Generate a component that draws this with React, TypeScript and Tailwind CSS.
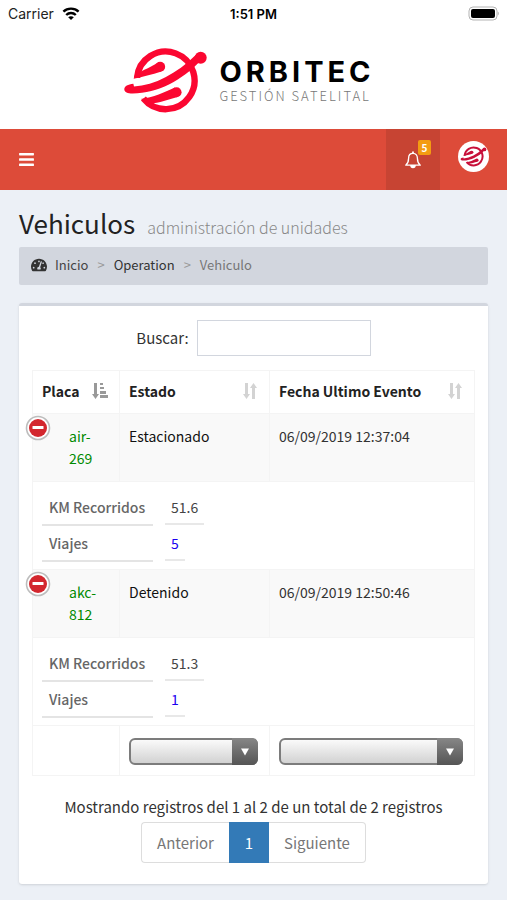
import React from 'react';
import { FaBars, FaTachometerAlt } from 'react-icons/fa';

interface Vehicle {
  prefix: string;
  number: string;
  status: string;
  lastEvent: string;
  km: string;
  trips: string;
}

const vehicles: Vehicle[] = [
  { prefix: 'air-', number: '269', status: 'Estacionado', lastEvent: '06/09/2019 12:37:04', km: '51.6', trips: '5' },
  { prefix: 'akc-', number: '812', status: 'Detenido', lastEvent: '06/09/2019 12:50:46', km: '51.3', trips: '1' },
];

const OrbitMark = ({ className }: { className: string }) => (
  <svg viewBox="3 12 258 200" className={className} fill="none" aria-hidden="true">
    <path d="M47 104 A86 86 0 1 1 66 166" stroke="currentColor" strokeWidth="19" />
    <path d="M37 107 L42 91 C70 82 90 68 112 58 L120 85 C90 95 65 100 37 107 Z" fill="currentColor" />
    <path d="M58 167 C95 164 130 146 160 133 L168 161 C140 168 115 180 84 180 Z" fill="currentColor" />
    <circle cx="116" cy="71" r="15" fill="currentColor" />
    <circle cx="165" cy="147" r="15" fill="currentColor" />
    <path
      d="M9 139 C9 129 20 124 36 122 L38 130 C100 126 165 92 222 36 L236 54 C180 112 110 150 34 151 C18 151 10 147 9 139 Z"
      fill="currentColor"
    />
    <circle cx="237" cy="44" r="18" fill="currentColor" />
  </svg>
);

const WifiIcon = () => (
  <svg viewBox="0 0 18 14" className="h-[14px] w-[18px]" fill="none" stroke="#000" strokeWidth="2.4" aria-hidden="true">
    <path d="M1.4 4.6 C5.6 0.6 12.4 0.6 16.6 4.6" />
    <path d="M4.2 8 C6.9 5.4 11.1 5.4 13.8 8" />
    <path d="M9 13 L6.2 10.2 C7.8 8.8 10.2 8.8 11.8 10.2 Z" fill="#000" stroke="none" />
  </svg>
);

const BatteryIcon = () => (
  <svg viewBox="0 0 33 16" className="h-4 w-[33px]" aria-hidden="true">
    <rect x="3" y="1" width="28" height="13" rx="4" fill="#fff" stroke="#b3b3b3" />
    <rect x="5" y="3" width="24" height="9" rx="2" fill="#000" />
    <path d="M31.8 5.5 C33 6.1 33 8.9 31.8 9.5 Z" fill="#a3a3a3" />
  </svg>
);

const BellIcon = () => (
  <svg viewBox="0 0 18 18" className="h-[18px] w-[18px]" fill="none" stroke="#fff" strokeWidth="1.3" aria-hidden="true">
    <path d="M9 2.4 C5.9 2.4 4.6 4.7 4.6 7.2 C4.6 10.7 3.4 12.8 1.7 14.2 H16.3 C14.6 12.8 13.4 10.7 13.4 7.2 C13.4 4.7 12.1 2.4 9 2.4 Z" strokeLinejoin="round" />
    <path d="M9 0.6 V2.4" strokeWidth="1.8" />
    <path d="M6.9 14.6 A2.1 2.1 0 0 0 11.1 14.6 Z" fill="#fff" />
  </svg>
);

const SortIcon = () => (
  <svg viewBox="0 0 16 18" className="h-[18px] w-4 shrink-0" fill="#d3d3d3" aria-hidden="true">
    <path d="M3 1 H6 V12 H8 L4.5 17 L1 12 H3 Z" />
    <path d="M10 17 H13 V6 H15 L11.5 1 L8 6 H10 Z" />
  </svg>
);

const SortAscIcon = () => (
  <svg viewBox="0 0 17 18" className="h-[18px] w-[17px] shrink-0" fill="#999" aria-hidden="true">
    <path d="M3 1 H6 V12 H8 L4.5 17 L1 12 H3 Z" />
    <rect x="9" y="1" width="3" height="2" />
    <rect x="9" y="5" width="4" height="2" />
    <rect x="9" y="9" width="6" height="3" />
    <rect x="9" y="13" width="8" height="3" />
  </svg>
);

const CollapseIcon = () => (
  <svg viewBox="0 0 26 26" className="h-[26px] w-[26px]" aria-hidden="true">
    <circle cx="13" cy="13" r="11.5" fill="#fff" stroke="#bdbdbd" strokeWidth="1.6" />
    <circle cx="13" cy="13" r="9" fill="#d3272e" />
    <rect x="7.5" y="11" width="11" height="3" rx="0.5" fill="#fff" />
  </svg>
);

const HeaderCell = ({ title, icon, width }: { title: string; icon: React.ReactNode; width: string }) => (
  <th className={`${width} border border-[#f4f4f4] pt-[9px] pr-[11px] pb-[11px] pl-[9px] text-left font-bold`}>
    <div className="flex items-center justify-between">
      <span className="whitespace-nowrap">{title}</span>
      {icon}
    </div>
  </th>
);

const FilterSelect = ({ label }: { label: string }) => (
  <div className="relative">
    <select
      aria-label={label}
      className="block h-[27px] w-full appearance-none rounded-[6px] border-2 border-[#7c7c7c] bg-linear-to-b from-[#fafafa] to-[#d2d2d2] pr-7"
    >
      <option></option>
    </select>
    <span className="pointer-events-none absolute inset-y-0 right-0 flex w-[26px] items-center justify-center rounded-r-[6px] bg-linear-to-b from-[#878787] to-[#555]">
      <svg viewBox="0 0 8 8" className="h-2 w-2" fill="#fff" aria-hidden="true">
        <path d="M0 0.5 H8 L4 7.5 Z" />
      </svg>
    </span>
  </div>
);

const VehicleRows = ({ vehicle }: { vehicle: Vehicle }) => (
  <>
    <tr className="bg-[#f9f9f9] align-top">
      <td className="relative border border-[#f4f4f4] pt-[11px] pb-3 pl-[36px] text-[#008a00]">
        <button type="button" aria-label="Ocultar detalle" className="absolute top-px -left-2">
          <CollapseIcon />
        </button>
        {vehicle.prefix}
        <br />
        {vehicle.number}
      </td>
      <td className="border border-[#f4f4f4] pt-[11px] pb-3 pl-[9px] text-[#111]">{vehicle.status}</td>
      <td className="border border-[#f4f4f4] pt-[11px] pb-3 pl-[9px] text-[#333]">{vehicle.lastEvent}</td>
    </tr>
    <tr>
      <td colSpan={3} className="border border-[#f4f4f4] px-[9px] pt-2 pb-[7px]">
        <dl>
          <div className="flex items-start gap-3">
            <dt className="h-9 w-[111px] border-b-2 border-[#e4e4e4] px-[7px] py-[6px] font-medium text-[#666]">KM Recorridos</dt>
            <dd className="border-b-2 border-[#e8e8e8] px-[6px] pt-[6px] pb-[5px] text-[#444]">{vehicle.km}</dd>
          </div>
          <div className="flex items-start gap-3">
            <dt className="h-9 w-[111px] border-b-2 border-[#e4e4e4] px-[7px] py-[6px] font-medium text-[#666]">Viajes</dt>
            <dd className="border-b-2 border-[#e8e8e8] px-[6px] pt-[6px] pb-[5px]">
              <a href="#viajes" className="text-[#1a00f0]">{vehicle.trips}</a>
            </dd>
          </div>
        </dl>
      </td>
    </tr>
  </>
);

export default function App() {
  return (
    <div className="min-h-screen bg-[#ecf0f6] pb-4 font-['Noto_Sans_CJK_SC',sans-serif] text-[14px] leading-[22px] text-[#333]">
      <div className="bg-white">
        <div className="grid h-7 grid-cols-3 items-center px-2 font-['Inter',sans-serif] text-[13px] text-black">
          <div className="flex items-center gap-2">
            <span className="text-[14px] text-[#222]">Carrier</span>
            <WifiIcon />
          </div>
          <span className="text-center font-semibold">1:51 PM</span>
          <div className="flex justify-end">
            <BatteryIcon />
          </div>
        </div>
        <div className="flex h-[101px] items-center justify-center gap-[10px] pt-1 pr-[10px]">
          <OrbitMark className="h-[67px] w-[87px] text-[#fb0731]" />
          <div className="flex flex-col">
            <span className="font-['Inter',sans-serif] text-[29px] leading-[30px] font-bold tracking-[4px] text-black">ORBITEC</span>
            <span className="text-[13px] leading-[18px] font-light tracking-[2px] text-[#777]">GESTIÓN SATELITAL</span>
          </div>
        </div>
      </div>

      <header className="flex h-[61px] items-stretch justify-between bg-[#dd4b39]">
        <button type="button" aria-label="Menú" className="px-[18px] text-white">
          <FaBars className="h-[17px] w-[17px]" />
        </button>
        <div className="flex">
          <button type="button" aria-label="Notificaciones" className="relative flex w-[54px] items-center justify-center bg-[#c74433]">
            <BellIcon />
            <span className="absolute top-[11px] right-[9px] h-[15px] w-[13px] rounded-[2px] bg-[#f39c12] text-center text-[10px] leading-[15px] font-bold text-white">5</span>
          </button>
          <button type="button" aria-label="Usuario" className="flex items-center px-[18px] pb-[6px]">
            <span className="flex h-[31px] w-[31px] items-center justify-center rounded-full bg-white">
              <OrbitMark className="h-[21px] w-[27px] text-[#c8103a]" />
            </span>
          </button>
        </div>
      </header>

      <main className="px-[19px] pt-[18px]">
        <h1 className="flex items-baseline gap-3 text-[26px] leading-[30px] text-[#222]">
          Vehiculos
          <small className="text-[16px] font-light text-[#888]">administración de unidades</small>
        </h1>
        <nav className="mt-[5px] flex h-[38px] items-center rounded-[2px] bg-[#d2d6de] px-3 pb-[2px] text-[13px]">
          <a href="#inicio" className="flex items-center gap-2 text-[#444]">
            <FaTachometerAlt className="h-4 w-4 text-[#333]" />
            Inicio
          </a>
          <span className="px-[9px] text-[#999]">&gt;</span>
          <a href="#operation" className="text-[#333]">Operation</a>
          <span className="px-[9px] text-[#999]">&gt;</span>
          <span className="text-[#777]">Vehiculo</span>
        </nav>

        <section className="mt-[18px] rounded-[3px] border-t-[3px] border-[#d2d6de] bg-white px-[13px] pt-[14px] pb-[21px] shadow-sm">
          <div className="flex items-center justify-center gap-2">
            <label htmlFor="search" className="text-[15px]">Buscar:</label>
            <input id="search" type="search" className="h-9 w-[174px] border border-[#d2d6de] bg-white px-2" />
          </div>

          <table className="mt-[14px] w-full table-fixed border-collapse">
            <thead>
              <tr className="text-[#222]">
                <HeaderCell title="Placa" icon={<SortAscIcon />} width="w-[87px]" />
                <HeaderCell title="Estado" icon={<SortIcon />} width="w-[150px]" />
                <HeaderCell title="Fecha Ultimo Evento" icon={<SortIcon />} width="w-auto" />
              </tr>
            </thead>
            <tbody>
              {vehicles.map((vehicle) => (
                <VehicleRows key={vehicle.number} vehicle={vehicle} />
              ))}
            </tbody>
            <tfoot>
              <tr>
                <td className="border border-[#f4f4f4]"></td>
                <td className="border border-[#f4f4f4] pt-3 pr-[11px] pb-[10px] pl-[9px]">
                  <FilterSelect label="Estado" />
                </td>
                <td className="border border-[#f4f4f4] pt-3 pr-[11px] pb-[10px] pl-[9px]">
                  <FilterSelect label="Fecha Ultimo Evento" />
                </td>
              </tr>
            </tfoot>
          </table>

          <p className="mt-5 text-center text-[15px]">Mostrando registros del 1 al 2 de un total de 2 registros</p>
          <div className="mt-1 flex justify-center text-[15px] text-[#777]">
            <button type="button" className="h-[41px] rounded-l-[4px] border border-r-0 border-[#ddd] px-[15px]">Anterior</button>
            <button type="button" className="h-[41px] w-10 bg-[#337ab7] text-white">1</button>
            <button type="button" className="h-[41px] rounded-r-[4px] border border-l-0 border-[#ddd] px-[15px]">Siguiente</button>
          </div>
        </section>
      </main>
    </div>
  );
}
